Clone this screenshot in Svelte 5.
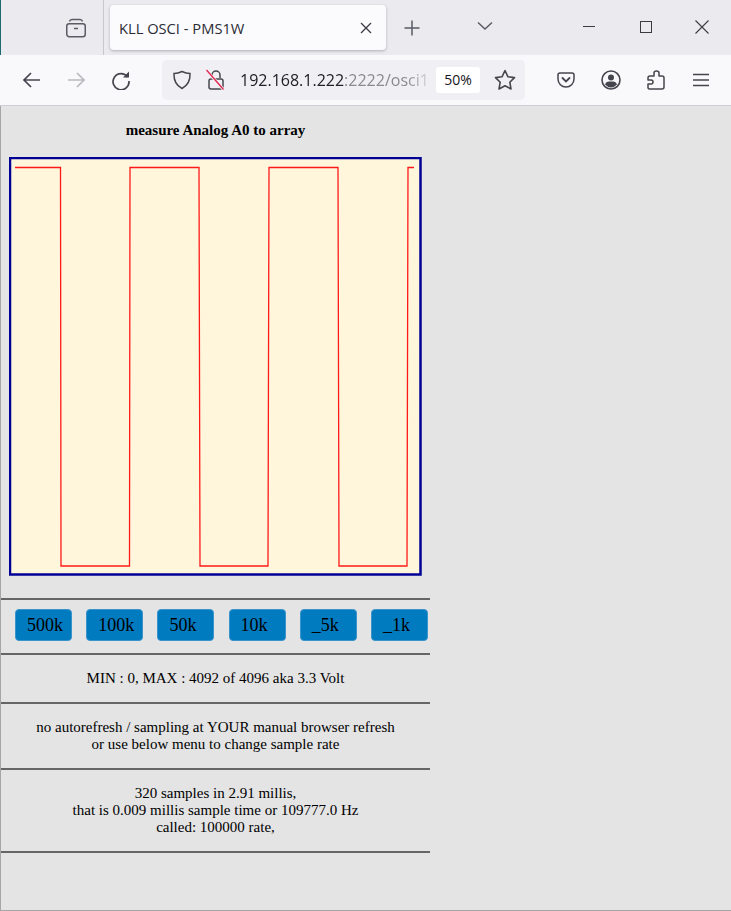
<script>
  const rates = ['500k', '100k', '50k', '10k', '_5k', '_1k'];

  // trace corners, read off the scope picture
  const trace = '15,167.5 60.5,167.5 61,566 129.5,566 130,167.5 199,167.5 200,566 268,566 269,167.5 338,167.5 339,566 407,566 408,167.5 414,167.5';
</script>

<div class="window">
  <div class="tabbar">
    <div class="tablist">
      <svg width="22" height="22" viewBox="0 0 22 22" fill="none" stroke="#5b5b66" stroke-width="1.5">
        <path d="M4.5 4.5 Q5 2.5 7 2.5 H15 Q17 2.5 17.500 4.500" />
        <rect x="1.750" y="6.750" width="18.500" height="13" rx="2.500" />
        <path d="M9 11.500 H13" />
      </svg>
    </div>
    <div class="tab">
      <span class="tabtitle">KLL OSCI - PMS1W</span>
      <svg width="12" height="12" viewBox="0 0 12 12" stroke="#3a3a42" stroke-width="1.300"><path d="M1 1 L11 11 M11 1 L1 11" /></svg>
    </div>
    <div class="newtab">
      <svg width="16" height="16" viewBox="0 0 16 16" stroke="#5b5b66" stroke-width="1.500"><path d="M8 0.500 V15.500 M0.500 8 H15.500" /></svg>
    </div>
    <div class="alltabs">
      <svg width="16" height="10" viewBox="0 0 16 10" fill="none" stroke="#5b5b66" stroke-width="1.500"><path d="M1 1.500 L8 8 L15 1.500" /></svg>
    </div>
    <div class="winbtns">
      <svg width="12" height="12" viewBox="0 0 12 12" stroke="#3c3c3c" stroke-width="1"><path d="M0 5.500 H12" /></svg>
      <svg width="12" height="12" viewBox="0 0 12 12" fill="none" stroke="#3c3c3c" stroke-width="1"><rect x="0.500" y="0.500" width="11" height="11" /></svg>
      <svg class="winclose" width="14" height="14" viewBox="0 0 14 14" stroke="#3c3c3c" stroke-width="1.100"><path d="M0.500 0.500 L13.500 13.500 M13.500 0.500 L0.500 13.500" /></svg>
    </div>
  </div>

  <div class="toolbar">
    <div class="navbtn">
      <svg width="20" height="20" viewBox="0 0 20 20" fill="none" stroke="#45454d" stroke-width="1.700"><path d="M18 10 H2 M9 3 L2 10 L9 17" /></svg>
    </div>
    <div class="navbtn">
      <svg width="20" height="20" viewBox="0 0 20 20" fill="none" stroke="#b9b9bd" stroke-width="1.700"><path d="M2 10 H18 M11 3 L18 10 L11 17" /></svg>
    </div>
    <div class="navbtn">
      <svg width="20" height="20" viewBox="0 0 20 20" fill="none" stroke="#45454d" stroke-width="1.700"><path d="M16.500 7 A8 8 0 1 0 18 11" /><path d="M18 1.500 V7.500 H12" fill="#45454d" stroke="none" /></svg>
    </div>
    <div class="urlbar">
      <svg class="shield" width="20" height="20" viewBox="0 0 20 20" fill="none" stroke="#45454d" stroke-width="1.500"><path d="M10 1.500 Q14 3.500 18 3.500 Q18.500 14 10 18.500 Q1.500 14 2 3.500 Q6 3.500 10 1.500 Z" /></svg>
      <svg class="lock" width="20" height="22" viewBox="0 0 20 22" fill="none" stroke="#45454d" stroke-width="1.500">
        <path d="M6 9 V6 A4 4 0 0 1 14 6 V9" />
        <rect x="3" y="10" width="14" height="10" rx="2" />
        <path d="M0.500 1.500 L17.500 20.500" stroke="#f0f0f4" stroke-width="3" />
        <path d="M0.500 1 L17.500 20.500" stroke="#e22850" stroke-width="1.400" />
      </svg>
      <div class="url"><span class="host">192.168.1.222</span>:2222/osci1</div>
      <div class="zoom">50%</div>
      <svg class="star" width="22" height="21" viewBox="0 0 22 21" fill="none" stroke="#45454d" stroke-width="1.600" stroke-linejoin="round"><path d="M11 1.500 L14 7.800 L20.500 8.600 L15.800 13.200 L17 20 L11 16.700 L5 20 L6.200 13.200 L1.500 8.600 L8 7.800 Z" /></svg>
    </div>
    <div class="extras">
      <svg width="18" height="16" viewBox="0 0 18 16" fill="none" stroke="#45454d" stroke-width="1.500"><path d="M3 1 H15 Q17 1 17 3 V7 A8 8 0 0 1 1 7 V3 Q1 1 3 1 Z" /><path d="M5.500 6 L9 9.500 L12.500 6" stroke-linecap="round" stroke-width="1.800" /></svg>
      <svg width="20" height="20" viewBox="0 0 20 20" fill="none" stroke="#45454d" stroke-width="1.600"><circle cx="10" cy="10" r="9" /><circle cx="10" cy="7.500" r="3" fill="#45454d" stroke="none" /><path d="M4 14.500 Q5 11.500 8 11.500 H12 Q15 11.500 16 14.500 Q13 17.500 10 17.500 Q7 17.500 4 14.500 Z" fill="#45454d" stroke="none" /></svg>
      <svg width="18" height="20" viewBox="0 0 18 20" fill="none" stroke="#45454d" stroke-width="1.500" stroke-linejoin="round"><path d="M2 19 H15 Q17 19 17 17 V8 Q17 6 15 6 H12 V3 Q12 1 9.500 1 Q7 1 7 3 V6 H3 Q1 6 1 8 V10 H4 Q6 10 6 12 Q6 14 4 14 H1 V18 Z" /></svg>
      <svg class="menu" width="16" height="14" viewBox="0 0 16 14" stroke="#45454d" stroke-width="1.400"><path d="M0 1.500 H16 M0 7 H16 M0 12.500 H16" /></svg>
    </div>
  </div>

  <main class="page">
    <div class="content">
      <h1>measure Analog A0 to array</h1>
      <div class="scope">
        <svg width="413" height="419" viewBox="9 157 413 419">
          <rect x="10" y="158" width="410.500" height="416.500" fill="#fff6dc" stroke="#000096" stroke-width="2.500" />
          <polyline points={trace} fill="none" stroke="#ff1818" stroke-width="1.300" />
        </svg>
      </div>
      <hr class="first" />
      <div class="rates">
        {#each rates as r}
          <button>{r}</button>
        {/each}
      </div>
      <hr />
      <p>MIN : 0, MAX : 4092 of 4096 aka 3.3 Volt</p>
      <hr />
      <p>no autorefresh / sampling at YOUR manual browser refresh<br />or use below menu to change sample rate</p>
      <hr />
      <p>320 samples in 2.91 millis,<br />that is 0.009 millis sample time or 109777.0 Hz<br />called: 100000 rate,</p>
      <hr />
    </div>
  </main>
</div>

<style>
  :global(body) {
    margin: 0;
    background: #e4e4e4;
  }
  .window {
    width: 731px;
    height: 911px;
    display: flex;
    flex-direction: column;
    overflow: hidden;
    font-family: "Open Sans", "Noto Sans", sans-serif;
  }
  .tabbar {
    height: 55px;
    flex: none;
    display: flex;
    align-items: center;
    background: #eaeaef;
    border-left: 1px solid #1e6a70;
    box-sizing: border-box;
  }
  .tablist {
    width: 103px;
    height: 55px;
    padding-right: 28px;
    box-sizing: border-box;
    display: flex;
    align-items: center;
    justify-content: flex-end;
    border-right: 1px solid #c8c8cc;
  }
  .tablist svg {
    margin-right: -12px;
  }
  .tab {
    width: 276px;
    height: 45px;
    margin-left: 6px;
    background: #fbfbfe;
    border-radius: 4px;
    box-shadow: 0 1px 3px rgba(0, 0, 0, 0.25);
    display: flex;
    align-items: center;
    justify-content: space-between;
    padding: 0 14px 0 9px;
    box-sizing: border-box;
  }
  .tabtitle {
    font-size: 14.700px;
    color: #2b2b33;
  }
  .newtab {
    margin-left: 18px;
    display: flex;
  }
  .alltabs {
    margin-left: 57px;
    margin-top: -3px;
    display: flex;
  }
  .winbtns {
    margin-left: auto;
    display: flex;
    align-items: center;
    gap: 45px;
    padding-right: 22px;
    margin-top: -2px;
  }
  .winclose {
    margin-left: -2px;
  }
  .toolbar {
    height: 51px;
    flex: none;
    display: flex;
    align-items: center;
    background: #f9f9fb;
    border-bottom: 1px solid #cfcfd4;
    box-sizing: border-box;
  }
  .navbtn {
    width: 45px;
    display: flex;
    justify-content: center;
  }
  .navbtn:first-child {
    margin-left: 9px;
  }
  .navbtn:nth-child(2) {
    margin-left: -1px;
  }
  .urlbar {
    width: 363px;
    height: 40px;
    margin-left: 19px;
    margin-bottom: 1px;
    background: #f0f0f4;
    border-radius: 5px;
    display: flex;
    align-items: center;
    box-sizing: border-box;
    padding-left: 10px;
  }
  .lock {
    margin-left: 14px;
  }
  .url {
    margin-left: 14px;
    width: 196px;
    overflow: hidden;
    white-space: nowrap;
    font-size: 16px;
    color: #8a8a90;
    -webkit-mask-image: linear-gradient(to right, #000 85%, transparent);
    mask-image: linear-gradient(to right, #000 85%, transparent);
  }
  .host {
    color: #20202a;
  }
  .zoom {
    width: 44px;
    height: 26px;
    background: #fff;
    border-radius: 3px;
    font-size: 14px;
    color: #15141a;
    display: flex;
    align-items: center;
    justify-content: center;
  }
  .star {
    margin-left: 14px;
  }
  .extras {
    margin-left: 32px;
    display: flex;
    align-items: center;
    gap: 26px;
  }
  .menu {
    margin-left: 2px;
  }
  .page {
    flex: 1;
    min-height: 0;
    background: #e4e4e4;
    border-left: 1px solid #a6a6a6;
    border-bottom: 1px solid #a6a6a6;
  }
  .content {
    width: 429px;
    font-family: "Liberation Serif", "Times New Roman", serif;
    font-size: 15px;
    color: #000;
    text-align: center;
  }
  h1 {
    margin: 0;
    padding-top: 16px;
    font-size: 15px;
    line-height: 16px;
    font-weight: bold;
  }
  .scope {
    margin-top: 19px;
    height: 419px;
    margin-left: 8px;
    text-align: left;
  }
  .scope svg {
    display: block;
  }
  hr {
    margin: 0;
    border: none;
    height: 2px;
    background: #666;
  }
  hr.first {
    margin-top: 22px;
  }
  .rates {
    display: grid;
    grid-template-columns: repeat(6, 57px);
    column-gap: 14.200px;
    padding: 9px 0 12px 14px;
  }
  button {
    height: 32px;
    padding: 0 0 0 11px;
    text-align: left;
    font-family: inherit;
    font-size: 18px;
    color: #000;
    background: #007bc0;
    border: 1px solid #3a94cc;
    border-radius: 4px;
  }
  p {
    margin: 0;
    padding: 15px 0;
    line-height: 17px;
  }
</style>
